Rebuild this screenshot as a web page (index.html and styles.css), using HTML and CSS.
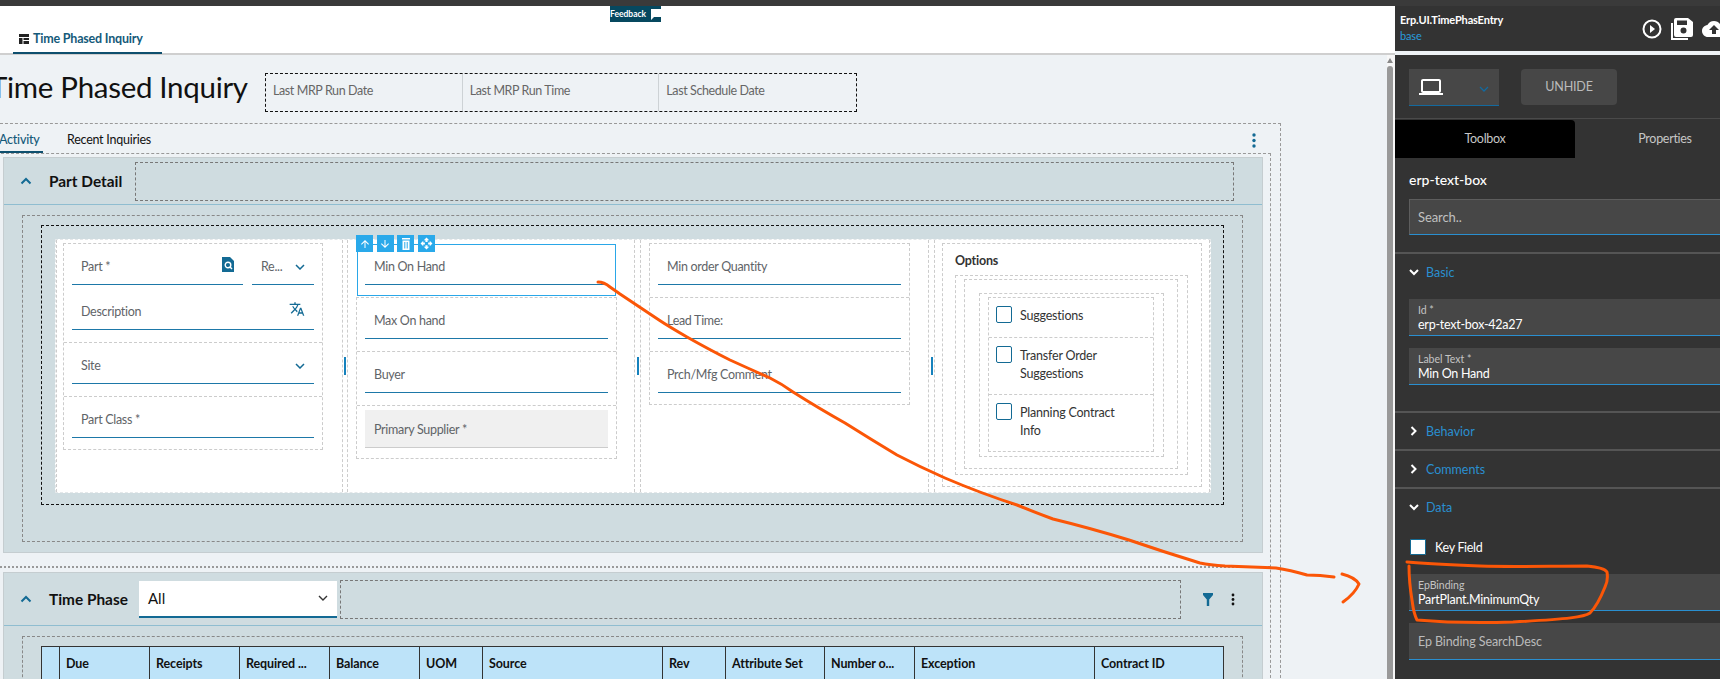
FILE: index.html
```html
<!DOCTYPE html>
<html lang="en">
<head>
<meta charset="utf-8">
<title>Time Phased Inquiry</title>
<link rel="stylesheet" href="styles.css">
</head>
<body>
<div class="app">
  <div class="topbar"></div>
  <div class="main">
    <section class="canvas">
      <div class="feedback"><span>Feedback</span><svg width="11" height="11" viewBox="0 0 11 11"><path d="M1 0h10v8H4L1 11z" fill="#fff"/></svg></div>
      <header class="apptabs">
        <div class="apptab"><svg width="10" height="10" viewBox="0 0 10 10"><path d="M0 0h10v3H0zM0 4h3.5v6H0zM4.5 4H10v2H4.5zM4.5 7H10v3H4.5z" fill="#222"/></svg><span>Time Phased Inquiry</span></div>
      </header>
      <div class="view">
        <div class="page">
          <div class="titlebar">
            <h1 class="title">Time Phased Inquiry</h1>
            <div class="meta">
              <div class="meta-cell">Last MRP Run Date</div>
              <div class="meta-cell">Last MRP Run Time</div>
              <div class="meta-cell">Last Schedule Date</div>
            </div>
          </div>
          <div class="sheet">
            <div class="sheet-tabs">
              <div class="sheet-tab active">Activity</div>
              <div class="sheet-tab">Recent Inquiries</div>
              <svg class="kebab" width="4" height="15" viewBox="0 0 4 15"><circle cx="2" cy="2" r="1.7"/><circle cx="2" cy="7.5" r="1.7"/><circle cx="2" cy="13" r="1.7"/></svg>
            </div>
            <div class="sheet-body">
              <section class="panel">
                <div class="panel-head">
                  <svg class="caret" width="12" height="8" viewBox="0 0 12 8"><path d="M1.5 6.5 6 2l4.5 4.5" fill="none" stroke="#136a94" stroke-width="2"/></svg>
                  <h2 class="panel-title">Part Detail</h2>
                  <div class="slot"></div>
                </div>
                <div class="outer-box">
                  <div class="black-box">
                    <div class="form">
                      <div class="col col-first">
                        <div class="stack">
                          <div class="row first">
                            <div class="pair">
                              <div class="field grow"><span>Part *</span>
                                <svg class="end-icon" width="12" height="15" viewBox="0 0 12 15"><path d="M0 0h8l4 4v11H0z" fill="#136a94"/><circle cx="6" cy="8" r="2.8" fill="none" stroke="#fff" stroke-width="1.4"/><path d="m8 10 2 2" stroke="#fff" stroke-width="1.4"/></svg>
                              </div>
                              <div class="field rev"><span>Re...</span>
                                <svg class="chev" width="10" height="6" viewBox="0 0 10 6"><path d="m1 1 4 4 4-4" fill="none" stroke="#136a94" stroke-width="1.5"/></svg>
                              </div>
                            </div>
                            <div class="field"><span>Description</span>
                              <svg class="end-icon" width="16" height="16" viewBox="0 0 24 24"><path fill="#136a94" d="M12.87 15.07l-2.54-2.51.03-.03c1.74-1.94 2.98-4.17 3.71-6.53H17V4h-7V2H8v2H1v1.99h11.17C11.5 7.92 10.44 9.75 9 11.35 8.07 10.32 7.3 9.19 6.69 8h-2c.73 1.63 1.73 3.17 2.98 4.56l-5.09 5.02L4 19l5-5 3.11 3.11.76-2.04zM18.5 10h-2L12 22h2l1.12-3h4.75L21 22h2l-4.5-12zm-2.62 7l1.62-4.33L19.12 17h-3.24z"/></svg>
                            </div>
                          </div>
                          <div class="row"><div class="field"><span>Site</span>
                            <svg class="chev" width="10" height="6" viewBox="0 0 10 6"><path d="m1 1 4 4 4-4" fill="none" stroke="#136a94" stroke-width="1.5"/></svg>
                          </div></div>
                          <div class="row last"><div class="field"><span>Part Class *</span></div></div>
                        </div>
                      </div>
                      <div class="splitter"></div>
                      <div class="col">
                        <div class="selected">
                          <div class="tools">
                            <div class="tool"><svg width="12" height="12" viewBox="0 0 24 24"><path fill="#fff" d="M4 12l1.41 1.41L11 7.83V20h2V7.83l5.58 5.59L20 12l-8-8-8 8z"/></svg></div>
                            <div class="tool"><svg width="12" height="12" viewBox="0 0 24 24"><path fill="#fff" d="M20 12l-1.41-1.41L13 16.17V4h-2v12.17l-5.58-5.59L4 12l8 8 8-8z"/></svg></div>
                            <div class="tool"><svg width="10" height="12" viewBox="0 0 10 12"><path fill="#fff" d="M1 0h8v1.5H1zM1.5 2.5h7V12h-7zM3.3 4v6.5h1V4zm2.4 0v6.5h1V4z" fill-rule="evenodd"/></svg></div>
                            <div class="tool"><svg width="13" height="13" viewBox="0 0 24 24"><path fill="#fff" d="M10 9h4V6h3l-5-5-5 5h3v3zm-1 1H6V7l-5 5 5 5v-3h3v-4zm14 2l-5-5v3h-3v4h3v3l5-5zm-9 3h-4v3H7l5 5 5-5h-3v-3z"/></svg></div>
                          </div>
                          <div class="field"><span>Min On Hand</span></div>
                        </div>
                        <div class="stack tight">
                          <div class="row"><div class="field"><span>Max On hand</span></div></div>
                          <div class="row"><div class="field"><span>Buyer</span></div></div>
                          <div class="row last supplier"><div class="field grey"><span>Primary Supplier *</span></div></div>
                        </div>
                      </div>
                      <div class="splitter wider"></div>
                      <div class="col wide">
                        <div class="stack">
                          <div class="row"><div class="field"><span>Min order Quantity</span></div></div>
                          <div class="row"><div class="field"><span>Lead Time:</span></div></div>
                          <div class="row last"><div class="field"><span>Prch/Mfg Comment</span></div></div>
                        </div>
                      </div>
                      <div class="splitter wider"></div>
                      <div class="col options">
                        <div class="opt-stack">
                          <h3 class="opt-title">Options</h3>
                          <div class="opt-a"><div class="opt-b"><div class="opt-c"><div class="opt-d">
                            <label class="check-row"><i class="check"></i><span>Suggestions</span></label>
                            <label class="check-row tall"><i class="check"></i><span>Transfer Order Suggestions</span></label>
                            <label class="check-row tall end"><i class="check"></i><span>Planning Contract Info</span></label>
                          </div></div></div></div>
                        </div>
                      </div>
                    </div>
                  </div>
                </div>
              </section>
              <div class="section-rule"></div>
              <section class="panel">
                <div class="panel-head tall">
                  <svg class="caret" width="12" height="8" viewBox="0 0 12 8"><path d="M1.5 6.5 6 2l4.5 4.5" fill="none" stroke="#136a94" stroke-width="2"/></svg>
                  <h2 class="panel-title short">Time Phase</h2>
                  <div class="select"><span>All</span><svg width="10" height="6" viewBox="0 0 10 6"><path d="m1 1 4 4 4-4" fill="none" stroke="#333" stroke-width="1.4"/></svg></div>
                  <div class="slot phase"></div>
                  <svg class="funnel" width="10" height="13" viewBox="0 0 10 13"><path d="M0 0h10v2L6.2 6.5V13H3.8V6.500L0 2z" fill="#136a94"/></svg>
                  <svg class="dots" width="4" height="13" viewBox="0 0 4 13"><circle cx="2" cy="2" r="1.4"/><circle cx="2" cy="6.500" r="1.4"/><circle cx="2" cy="11" r="1.4"/></svg>
                </div>
                <div class="outer-box grid-box">
                  <div class="grid">
                    <div class="cell"></div><div class="cell">Due</div><div class="cell">Receipts</div><div class="cell">Required ...</div><div class="cell">Balance</div><div class="cell">UOM</div><div class="cell">Source</div><div class="cell">Rev</div><div class="cell">Attribute Set</div><div class="cell">Number o...</div><div class="cell">Exception</div><div class="cell">Contract ID</div>
                  </div>
                </div>
              </section>
            </div>
          </div>
        </div>
        <div class="scroll"><i class="scroll-up"></i><i class="scroll-thumb"></i></div>
      </div>
    </section>
    <aside class="side">
      <div class="side-head">
        <div class="side-name"><strong>Erp.UI.TimePhasEntry</strong><span>base</span></div>
        <div class="side-icons">
          <svg width="20" height="20" viewBox="0 0 20 20"><circle cx="10" cy="10" r="8.500" fill="none" stroke="#fff" stroke-width="2"/><path d="M8 6v8l5-4z" fill="#fff"/></svg>
          <svg width="22" height="22" viewBox="0 0 22 22"><path fill="#fff" d="M0 5h2v15h15v2H0z"/><path fill="#fff" fill-rule="evenodd" d="M5 0h12l5 4v13a2 2 0 0 1-2 2H5a2 2 0 0 1-2-2V2a2 2 0 0 1 2-2zm1 2.500V7h10V2.500zM12.500 9.500a3 3 0 1 0 0 6 3 3 0 0 0 0-6z"/></svg>
          <svg width="24" height="24" viewBox="0 0 24 24"><path fill="#fff" d="M19.35 10.040C18.670 6.590 15.640 4 12 4 9.110 4 6.600 5.640 5.350 8.040 2.340 8.360 0 10.910 0 14c0 3.310 2.690 6 6 6h13c2.760 0 5-2.240 5-5 0-2.640-2.050-4.780-4.650-4.960zM14 13v4h-4v-4H7l5-5 5 5h-3z"/></svg>
        </div>
      </div>
      <div class="side-gap"></div>
      <div class="side-body">
        <div class="device-row">
          <div class="device">
            <svg width="24" height="24" viewBox="0 0 24 24"><path fill="#fff" d="M20 18c1.100 0 2-.9 2-2V6c0-1.100-.9-2-2-2H4c-1.100 0-2 .9-2 2v10c0 1.100.9 2 2 2H0v2h24v-2h-4zM4 6h16v10H4V6z"/></svg>
            <svg width="10" height="6" viewBox="0 0 10 6"><path d="m1 1 4 4 4-4" fill="none" stroke="#136a9f" stroke-width="1.300"/></svg>
          </div>
          <div class="unhide">UNHIDE</div>
        </div>
        <div class="side-tabs">
          <div class="side-tab on">Toolbox</div>
          <div class="side-tab">Properties</div>
        </div>
        <div class="comp-name">erp-text-box</div>
        <div class="search">Search..</div>
        <div class="acc open">
          <div class="acc-head"><svg width="10" height="7" viewBox="0 0 10 7"><path d="m1 1 4 4 4-4" fill="none" stroke="#fff" stroke-width="2"/></svg><span>Basic</span></div>
          <div class="prop"><small>Id *</small><b>erp-text-box-42a27</b></div>
          <div class="prop"><small>Label Text *</small><b>Min On Hand</b></div>
        </div>
        <div class="acc">
          <div class="acc-head"><svg width="7" height="10" viewBox="0 0 7 10"><path d="m1 1 4 4-4 4" fill="none" stroke="#fff" stroke-width="2"/></svg><span>Behavior</span></div>
        </div>
        <div class="acc">
          <div class="acc-head"><svg width="7" height="10" viewBox="0 0 7 10"><path d="m1 1 4 4-4 4" fill="none" stroke="#fff" stroke-width="2"/></svg><span>Comments</span></div>
        </div>
        <div class="acc data">
          <div class="acc-head"><svg width="10" height="7" viewBox="0 0 10 7"><path d="m1 1 4 4 4-4" fill="none" stroke="#fff" stroke-width="2"/></svg><span>Data</span></div>
          <label class="key"><i></i><span>Key Field</span></label>
          <div class="prop"><small>EpBinding</small><b>PartPlant.MinimumQty</b></div>
          <div class="prop empty"><em>Ep Binding SearchDesc</em></div>
        </div>
      </div>
    </aside>
  </div>
  <svg class="ink" width="1720" height="679" viewBox="0 0 1720 679">
    <path d="M598 282Q604 282 610 287L620 294L659 320Q668 326 687 337Q710 350 730 360Q752 370 770 378Q782 384 793 392Q820 409 845 423Q872 440 897 455Q920 467 945 478Q980 493 1017 505Q1034 512 1053 519Q1090 528 1129 540Q1164 552 1200 563Q1210 565 1225 566Q1250 567 1276 568Q1290 570 1307 575Q1320 575 1334 577" class="stroke"/>
    <path d="M1342 574C1350 576 1356 579 1359 584C1356 591 1350 597 1343 602" class="stroke"/>
    <path d="M1407 562C1430 564 1455 565 1480 566C1515 567 1550 566 1587 566C1598 567 1605 569 1607 572C1608 578 1607 583 1605 587C1601 597 1597 606 1590 613C1584 617 1570 619 1513 622C1480 623 1440 622 1417 620C1413 612 1413 606 1412 600C1410 588 1409 577 1409 566" class="stroke"/>
  </svg>
</div>
</body>
</html>
```
FILE: styles.css
```css
* { box-sizing: border-box; }
html, body { margin: 0; height: 100%; overflow: hidden; }
body { font-family: Lato, "Noto Sans", sans-serif; font-size: 13px; color: #222; }
h1, h2, h3 { margin: 0; }
.app { position: relative; display: flex; flex-direction: column; width: 1720px; height: 679px; overflow: hidden; }
.topbar { height: 6px; flex: none; background: #3a3a3a; }
.main { display: flex; flex: 1; min-height: 0; }

/* canvas */
.canvas { position: relative; width: 1395px; flex: none; display: flex; flex-direction: column; min-height: 0; }
.feedback { position: absolute; left: 610px; top: 0; width: 51px; height: 16px; background: #06485f; color: #fff; font-size: 8.5px; font-weight: 700; display: flex; align-items: center; justify-content: space-between; }
.apptabs { height: 49px; flex: none; background: #fff; border-bottom: 2px solid #cfcfcf; padding-left: 13px; }
.apptab { width: 149px; height: 48px; padding: 25px 0 0 6px; border-bottom: 2px solid #0e4f6e; display: flex; align-items: flex-start; gap: 4px; color: #155a7a; font-size: 12.5px; letter-spacing: -.2px; font-weight: 700; line-height: 15px; white-space: nowrap; }
.apptab svg { margin-top: 3px; flex: none; }
.view { flex: 1; min-height: 0; background: #eef2f5; display: flex; }
.page { width: 1387px; flex: none; }
.scroll { width: 8px; position: relative; display: flex; flex-direction: column; align-items: flex-start; background: #f7f7f7; }
.scroll-up { width: 0; height: 0; border: 3px solid transparent; border-bottom: 5px solid #888; border-top: 0; margin-top: 3px; }
.scroll-thumb { display: block; width: 6px; flex: 1; margin-top: 3px; background: #999; border-radius: 3px 3px 0 0; }

.titlebar { height: 68px; display: flex; align-items: flex-start; padding-top: 18px; }
.title { width: 275px; margin: -4px 0 0 -10px; flex: none; font-size: 29.5px; letter-spacing: -.3px; font-weight: 400; color: #111; line-height: 36px; white-space: nowrap; }
.meta { width: 592px; height: 39px; border: 1px dashed #111; display: flex; }
.meta-cell { width: 197px; padding-left: 7px; line-height: 33px; color: #666; border-right: 1px solid #cdd2d5; font-size: 12.5px; letter-spacing: -.4px; }
.meta-cell:last-child { border-right: 0; }

.sheet { width: 1291px; margin-left: -10px; border: 1px dashed #999; border-bottom: 0; }
.sheet-tabs { height: 29px; display: flex; gap: 24px; padding-left: 9px; padding-right: 24px; align-items: stretch; }
.sheet-tab { line-height: 32px; font-size: 12.5px; letter-spacing: -.25px; color: #111; }
.sheet-tab.active { width: 43px; color: #155a7a; border-bottom: 2px solid #0e4f6e; font-weight: 500; text-indent: -1px; }
.kebab { margin: 9px 0 0 auto; fill: #136a94; }
.sheet-body { margin-right: 9px; border: 1px dashed #999; border-bottom: 0; padding: 3px 7px 0 11px; }

.panel { background: #cfdce0; border: 1px solid #c5cdd0; }
.panel-head { height: 47px; display: flex; align-items: center; padding-right: 28px; border-bottom: 1px solid #8fbdd0; }
.panel-head.tall { height: 53px; padding-right: 29px; }
.caret { margin-left: 16px; flex: none; }
.panel-title { width: 85px; margin-left: 17px; flex: none; font-size: 15.4px; font-weight: 700; color: #111; }
.panel-title.short { width: 90px; }
.slot { flex: 1; height: 39px; border: 1px dashed #777; margin-left: 1px; }
.slot.phase { margin-left: 3px; flex: none; width: 841px; }
.select { width: 198px; height: 37px; flex: none; background: #fff; border-bottom: 2px solid #136a94; display: flex; align-items: center; justify-content: space-between; padding: 0 9px; font-size: 15px; color: #111; }
.funnel { margin-left: 22px; flex: none; }
.dots { margin-left: 18px; flex: none; fill: #111; }

.outer-box { margin: 10px 19px 10px 18px; border: 1px dashed #888; padding: 9px 18px 36px; }
.black-box { border: 1px dashed #111; padding: 13px 12px 11px 13px; }
.form { height: 254px; background: #fff; display: flex; border: 1px dashed #e4e8ea; }
.col { width: 288px; flex: none; padding: 3px 17px 0 8px; border-left: 1px dashed #ccc; border-right: 1px dashed #ccc; }
.col-first { width: 287px; padding-left: 6px; padding-right: 19px; }
.col.wide { width: 289px; padding-right: 18px; }
.col.options { flex: 1; width: auto; padding: 3px 7px 3px 7px; }
.splitter { width: 4px; height: 18px; flex: none; align-self: center; background: linear-gradient(#1682bd, #1682bd) center / 2px 100% no-repeat; }
.splitter.wider { width: 5px; }
.stack { border: 1px dashed #ccc; }
.stack.tight { margin-top: 1px; }
.row { padding: 4px 8px 12px; border-bottom: 1px dashed #ccc; }
.row.last { border-bottom: 0; padding-bottom: 11px; }
.supplier.last { padding-bottom: 10px; }
.pair { display: flex; gap: 9px; margin-bottom: 8px; }
.field { height: 37px; display: flex; align-items: center; justify-content: space-between; padding: 1px 9px 0; border-bottom: 1.5px solid #1d78a8; color: #5f6468; font-size: 12.5px; letter-spacing: -.3px; white-space: nowrap; }
.field.grow { flex: 1; }
.field.rev { width: 62px; flex: none; }
.field.grey { height: 38px; background: #f0f0f0; border-bottom-color: #ccc; }
.end-icon { flex: none; margin-top: -5px; }
.selected { position: relative; height: 52px; margin: 1px 1px 0 1px; border: 1px solid #2aa7e8; padding: 3px 7px 0; }
.tools { position: absolute; left: -2px; top: -10px; display: flex; gap: 3.5px; }
.tool { width: 17px; height: 17px; background: #29a9ea; display: flex; align-items: center; justify-content: center; }
.opt-stack { height: 244px; border: 1px dashed #ccc; padding: 0 13px 0 12px; }
.opt-title { height: 31px; line-height: 34px; font-size: 12.5px; font-weight: 700; color: #333; letter-spacing: -.2px; }
.opt-a { height: 200px; border: 1px dashed #ccc; padding: 3px 9px 5px 8px; }
.opt-b { height: 190px; border: 1px dashed #ccc; padding: 13px 13px 11px 14px; }
.opt-c { height: 164px; border: 1px dashed #ccc; padding: 3px 9px 4px 8px; }
.opt-d { height: 155px; border: 1px dashed #ccc; }
.check-row { display: flex; gap: 8px; height: 40px; padding: 8px 7px 0; border-bottom: 1px dashed #ccc; line-height: 18px; color: #333; font-size: 12.5px; letter-spacing: -.2px; }
.check-row.tall { height: 57px; }
.check-row.end { border-bottom: 0; }
.check-row span { margin-top: 1px; width: 110px; }
.check { width: 16px; height: 17px; flex: none; border: 1px solid #136a94; border-radius: 2px; }
.grid-box { margin-bottom: 0; padding-bottom: 0; padding-right: 18px; }
.grid { display: grid; grid-template-columns: 18px 90px 90px 90px 90px 63px 180px 63px 99px 90px 180px 131px; border-top: 1.5px solid #333; border-right: 1.5px solid #333; background: #bde3f9; }
.cell { height: 34px; padding-left: 6px; line-height: 33px; border-left: 1.5px solid #333; font-size: 12.5px; letter-spacing: -.1px; font-weight: 700; color: #111; white-space: nowrap; }
.section-rule { margin: 13px -7px 4px -11px; border-top: 2px dotted #999; }

/* side panel */
.side { flex: 1; min-width: 0; display: flex; flex-direction: column; background: #333; overflow: hidden; color: #fff; }
.side-head { height: 45px; flex: none; display: flex; align-items: flex-start; padding-left: 5px; }
.side-name { width: 242px; flex: none; padding-top: 6px; line-height: 16px; font-size: 11px; letter-spacing: -.15px; display: flex; flex-direction: column; }
.side-name strong { font-weight: 700; }
.side-name span { color: #2a9bdc; }
.side-icons { display: flex; align-items: center; gap: 9px; margin-top: 11px; flex: none; }
.side-gap { height: 4px; flex: none; background: #eef2f5; }
.side-body { flex: 1; width: 400px; }
.device-row { height: 64px; padding: 14px 0 0 14px; display: flex; gap: 22px; border-bottom: 1px solid #4a4a4a; }
.device { width: 90px; height: 37px; background: #474747; border-bottom: 1px solid #136a9f; display: flex; align-items: center; justify-content: space-between; padding: 0 10px; }
.device svg:last-child { margin-top: 4px; }
.unhide { width: 96px; height: 36px; background: #474747; border-radius: 4px; text-align: center; line-height: 35px; color: #bbb; font-size: 12.5px; letter-spacing: -.2px; }
.side-tabs { height: 38px; margin-top: 1px; display: flex; }
.side-tab { width: 180px; text-align: center; line-height: 38px; font-size: 12.5px; letter-spacing: -.3px; color: #c6c6c6; }
.side-tab.on { background: #000; border-top-right-radius: 4px; }
.comp-name { margin-left: 14px; height: 41px; line-height: 44px; font-size: 14px; color: #fff; font-weight: 500; }
.search { margin-left: 14px; height: 36px; padding-left: 8px; line-height: 34px; background: #474747; border: 1px solid #5d5d5d; border-bottom: 1.5px solid #2a8fd0; color: #c0c0c0; font-size: 13px; letter-spacing: -.1px; }
.acc { border-top: 2px solid #555; height: 38px; }
.acc.open { margin-top: 17px; height: 159px; }
.acc.data { height: auto; }
.acc-head { height: 36px; display: flex; align-items: center; padding-left: 14px; color: #2a8fd0; font-size: 12.5px; }
.acc-head svg { width: 10px; }
.acc-head span { margin-left: 7px; }
.prop { margin: 9px 0 12px 14px; height: 37px; background: #474747; border-bottom: 1.5px solid #2a8fd0; padding: 5px 9px 0; display: flex; flex-direction: column; }
.prop small { font-size: 10.5px; line-height: 13px; color: #c4c4c4; }
.prop b { font-size: 12.5px; line-height: 15px; font-weight: 400; color: #fff; letter-spacing: -.25px; }
.prop.empty { padding-top: 0; justify-content: center; }
.prop em { font-style: normal; font-size: 12.5px; letter-spacing: -.1px; color: #bbb; }
.key { display: flex; align-items: center; gap: 9px; margin: 14px 0 19px 15px; height: 16px; font-size: 12.5px; letter-spacing: -.3px; color: #fff; }
.key i { width: 16px; height: 16px; background: #fff; border: 1px solid #136a94; border-radius: 1px; }
.data .prop { margin-top: 0; }
.data .prop:last-child { margin-top: 12px; }

/* hand-drawn annotation lies over everything */
.ink { position: absolute; left: 0; top: 0; pointer-events: none; }
.stroke { fill: none; stroke: #fb5607; stroke-width: 3; stroke-linecap: round; stroke-linejoin: round; }
```
